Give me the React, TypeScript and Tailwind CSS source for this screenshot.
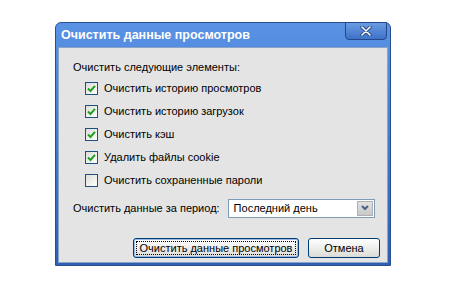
const font = { fontFamily: '"Liberation Sans", Arial, sans-serif' };

function Check({ checked }: { checked: boolean }) {
  return (
    <span className="w-[13px] h-[13px] border border-[#1c5180] bg-gradient-to-br from-[#dcdcd7] to-white flex items-center justify-center shrink-0">
      {checked && (
        <svg width="9" height="9" viewBox="0 0 9 9">
          <path d="M1 4.5 L3.5 7 L8 1.8" stroke="#21a121" strokeWidth="2" fill="none" />
        </svg>
      )}
    </span>
  );
}

const items = [
  { label: "Очистить историю просмотров", checked: true },
  { label: "Очистить историю загрузок", checked: true },
  { label: "Очистить кэш", checked: true },
  { label: "Удалить файлы cookie", checked: true },
  { label: "Очистить сохраненные пароли", checked: false },
];

export default function App() {
  return (
    <div className="bg-white w-[450px] h-[303px] pt-[22px] pl-[55px]" style={font}>
      <div className="w-[336px] h-[244px] flex flex-col rounded-t-[6px] bg-gradient-to-b from-[#5a93e4] via-[#4179d0] to-[#2f5fb0] border border-[#2a4f8f]">
        {/* title bar */}
        <div className="h-[24px] flex items-start justify-between pl-[5px] pr-[3px]">
          <span className="text-white font-bold text-[12.5px] leading-none mt-[6px] whitespace-nowrap">
            Очистить данные просмотров
          </span>
          <button className="w-[42px] h-[18px] -mt-px rounded-b-[4px] border border-[#24468a] bg-gradient-to-b from-[#6a9be2] to-[#3e72c8] flex items-center justify-center">
            <svg width="12" height="10" viewBox="0 0 12 10">
              <path d="M2 1 L10 9 M10 1 L2 9" stroke="#274a86" strokeWidth="3.4" strokeLinecap="round" />
              <path d="M2 1 L10 9 M10 1 L2 9" stroke="#ffffff" strokeWidth="1.6" strokeLinecap="round" />
            </svg>
          </button>
        </div>
        {/* body */}
        <div className="flex-1 mx-[2px] mb-[2px] bg-[#e4e4e4] border border-[#8aa4c8] flex flex-col pl-[14px] pt-[12px] text-[11px] text-black whitespace-nowrap">
          <div className="h-[14px] leading-[14px]">Очистить следующие элементы:</div>
          <div className="flex flex-col mt-[3px] pl-[12px]">
            {items.map((it) => (
              <div key={it.label} className="h-[23px] flex items-center gap-[6px]">
                <Check checked={it.checked} />
                <span>{it.label}</span>
              </div>
            ))}
          </div>
          <div className="flex items-center mt-[5px] h-[22px]">
            <span>Очистить данные за период:</span>
            <div className="ml-[8px] w-[147px] h-[19px] bg-white border border-[#7f9db9] flex items-center">
              <span className="flex-1 pl-[5px]">Последний день</span>
              <span className="w-[16px] h-[15px] mr-px bg-gradient-to-b from-[#e2e2e2] to-[#c8c8c8] border border-[#b0b0b0] flex items-center justify-center">
                <svg width="8" height="6" viewBox="0 0 8 6">
                  <path d="M1 1 L4 4 L7 1" stroke="#4d6185" strokeWidth="2" fill="none" />
                </svg>
              </span>
            </div>
          </div>
          <div className="flex justify-end gap-[9px] pr-[7px] mt-[19px]">
            <button className="w-[166px] h-[20px] rounded-[3px] border border-[#003c74] bg-gradient-to-b from-white to-[#dcdcd8] p-[2px] shadow-[inset_0_0_0_1px_#9cb8e4]">
              <span className="block h-full border border-dotted border-black leading-[12px] text-[11px]">Очистить данные просмотров</span>
            </button>
            <button className="w-[72px] h-[20px] rounded-[3px] border border-[#003c74] bg-gradient-to-b from-white to-[#dcdcd8] text-[11px]">
              Отмена
            </button>
          </div>
        </div>
      </div>
    </div>
  );
}
